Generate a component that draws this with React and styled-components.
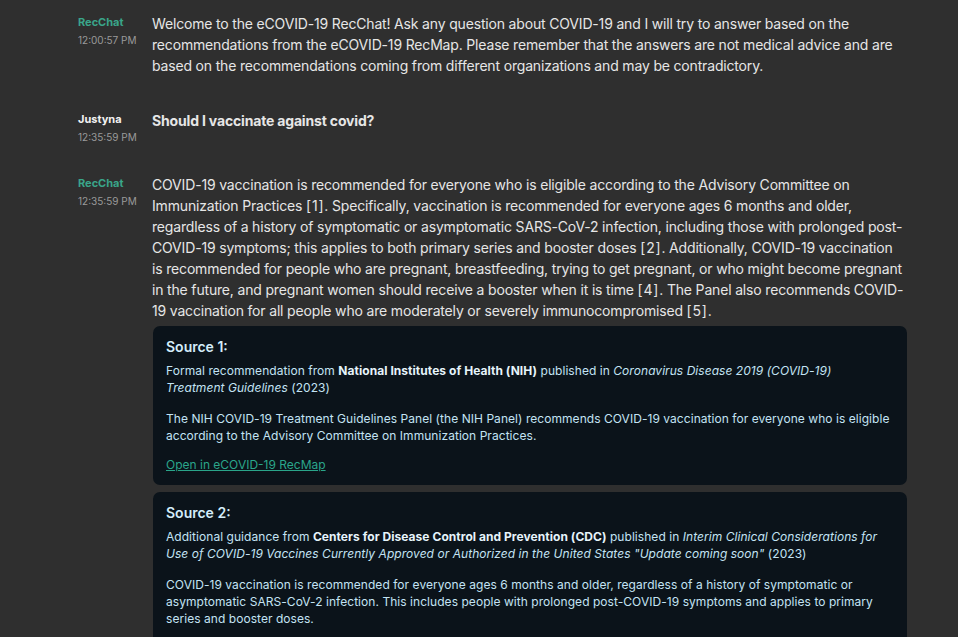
import React from "react";
import styled, { createGlobalStyle } from "styled-components";

const GlobalStyle = createGlobalStyle`
	html, body {
		margin: 0;
		padding: 0;
		background: #2f2f2f;
	}
	body {
		font-family: Inter, "Noto Sans", sans-serif;
		-webkit-font-smoothing: antialiased;
	}
`;

const messages = [
	{
		id: 1,
		sender: "RecChat",
		bot: true,
		time: "12:00:57 PM",
		text: "Welcome to the eCOVID-19 RecChat! Ask any question about COVID-19 and I will try to answer based on the recommendations from the eCOVID-19 RecMap. Please remember that the answers are not medical advice and are based on the recommendations coming from different organizations and may be contradictory.",
	},
	{
		id: 2,
		sender: "Justyna",
		time: "12:35:59 PM",
		text: "Should I vaccinate against covid?",
	},
	{
		id: 3,
		sender: "RecChat",
		bot: true,
		time: "12:35:59 PM",
		text: "COVID-19 vaccination is recommended for everyone who is eligible according to the Advisory Committee on Immunization Practices [1]. Specifically, vaccination is recommended for everyone ages 6 months and older, regardless of a history of symptomatic or asymptomatic SARS-CoV-2 infection, including those with prolonged post-COVID-19 symptoms; this applies to both primary series and booster doses [2]. Additionally, COVID-19 vaccination is recommended for people who are pregnant, breastfeeding, trying to get pregnant, or who might become pregnant in the future, and pregnant women should receive a booster when it is time [4]. The Panel also recommends COVID-19 vaccination for all people who are moderately or severely immunocompromised [5].",
		sources: [
			{
				id: 1,
				kind: "Formal recommendation",
				org: "National Institutes of Health (NIH)",
				title: "Coronavirus Disease 2019 (COVID-19) Treatment Guidelines",
				year: 2023,
				quote: "The NIH COVID-19 Treatment Guidelines Panel (the NIH Panel) recommends COVID-19 vaccination for everyone who is eligible according to the Advisory Committee on Immunization Practices.",
			},
			{
				id: 2,
				kind: "Additional guidance",
				org: "Centers for Disease Control and Prevention (CDC)",
				title: 'Interim Clinical Considerations for Use of COVID-19 Vaccines Currently Approved or Authorized in the United States "Update coming soon"',
				year: 2023,
				quote: "COVID-19 vaccination is recommended for everyone ages 6 months and older, regardless of a history of symptomatic or asymptomatic SARS-CoV-2 infection. This includes people with prolonged post-COVID-19 symptoms and applies to primary series and booster doses.",
			},
		],
	},
];

// split answer text so that the [n] references can be styled
const withCitations = (text) =>
	text.split(/(\[\d+\])/).map((part, i) =>
		/^\[\d+\]$/.test(part) ? <Cite key={i}>{part}</Cite> : part
	);

const App = () => {
	return (
		<>
			<GlobalStyle />
			<ChatLog>
				{messages.map((msg) => (
					<MessageRow key={msg.id}>
						<Meta>
							<Sender $bot={msg.bot}>{msg.sender}</Sender>
							<Time>{msg.time}</Time>
						</Meta>
						<Body>
							<MessageText $strong={!msg.bot}>{withCitations(msg.text)}</MessageText>
							{msg.sources && (
								<SourceList>
									{msg.sources.map((src) => (
										<SourceCard key={src.id}>
											<SourceTitle>Source {src.id}:</SourceTitle>
											<SourceText>
												{src.kind} from <strong>{src.org}</strong> published in{" "}
												<em>{src.title}</em> ({src.year})
											</SourceText>
											<SourceText>{src.quote}</SourceText>
											<SourceLink href="#">Open in eCOVID-19 RecMap</SourceLink>
										</SourceCard>
									))}
								</SourceList>
							)}
						</Body>
					</MessageRow>
				))}
			</ChatLog>
		</>
	);
};

const ChatLog = styled.div`
	display: flex;
	flex-direction: column;
	gap: 34px;
	padding: 13px 0 0 78px;
	min-height: 100vh;
	box-sizing: border-box;
	overflow: hidden;
`;

const MessageRow = styled.div`
	display: flex;
	align-items: flex-start;
`;

const Meta = styled.div`
	width: 74px;
	flex-shrink: 0;
	display: flex;
	flex-direction: column;
	margin-bottom: -6px;
`;

const Sender = styled.span`
	font-size: 11px;
	font-weight: 700;
	line-height: 18px;
	color: ${(p) => (p.$bot ? "#3aa58a" : "#f2f2f2")};
`;

const Time = styled.span`
	font-size: 10px;
	line-height: 18px;
	color: #9a9a9a;
`;

const Body = styled.div`
	width: 754.5px;
	display: flex;
	flex-direction: column;
`;

const MessageText = styled.p`
	margin: 0;
	font-size: 14px;
	line-height: 21px;
	letter-spacing: -0.17px;
	color: #e6e6e6;
	font-weight: ${(p) => (p.$strong ? 700 : 400)};
`;

const Cite = styled.span`
	letter-spacing: 0.8px;
`;

const SourceList = styled.div`
	display: flex;
	flex-direction: column;
	gap: 7px;
	margin: 5px 0 0 1px;
	width: 754px;
`;

const SourceCard = styled.div`
	background: #0b131a;
	border-radius: 7px;
	padding: 11px 17.5px 12px 13px;
	display: flex;
	flex-direction: column;
	align-items: flex-start;
	gap: 13px;
	color: #c3e3f4;

	& > :first-child + * {
		margin-top: -8px;
	}
`;

const SourceTitle = styled.h3`
	margin: 0;
	font-size: 14px;
	font-weight: 600;
	line-height: 20px;
	color: #d4edfa;
`;

const SourceText = styled.p`
	margin: 0;
	font-size: 12px;
	line-height: 17.3px;
	letter-spacing: 0.05px;

	strong {
		font-weight: 700;
		color: #e6f4fb;
	}
`;

const SourceLink = styled.a`
	margin-top: -1px;
	font-size: 12px;
	line-height: 17px;
	color: #2aa58a;
	text-decoration: underline;
`;

export default App;
